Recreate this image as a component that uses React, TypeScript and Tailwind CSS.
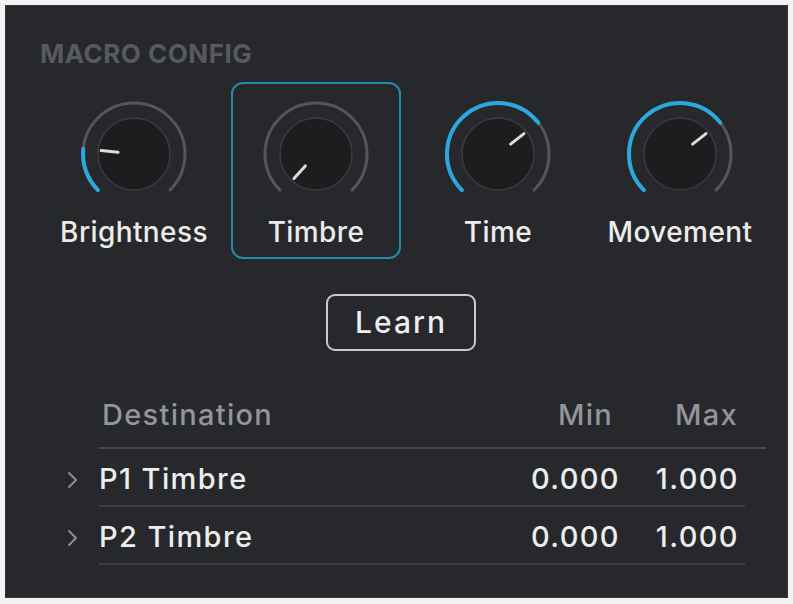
import React from 'react';

// ====================================================================
// Knob
// ====================================================================

const START = -135;
const END = 135;

function polar(cx: number, cy: number, r: number, deg: number) {
  const a = (deg * Math.PI) / 180;
  return { x: cx + r * Math.sin(a), y: cy - r * Math.cos(a) };
}

function arc(cx: number, cy: number, r: number, a0: number, a1: number) {
  const p0 = polar(cx, cy, r, a0);
  const p1 = polar(cx, cy, r, a1);
  const large = a1 - a0 > 180 ? 1 : 0;
  return `M ${p0.x} ${p0.y} A ${r} ${r} 0 ${large} 1 ${p1.x} ${p1.y}`;
}

function Knob({ angle }: { angle: number }) {
  const c = 55;
  const p0 = polar(c, c, 16, angle);
  const p1 = polar(c, c, 33, angle);
  return (
    <svg width="110" height="110" viewBox="0 0 110 110">
      <path d={arc(c, c, 51, START, END)} fill="none" stroke="#54565a" strokeWidth="3" strokeLinecap="round" />
      {angle > START + 2 && (
        <path d={arc(c, c, 51, START, angle)} fill="none" stroke="#29a9de" strokeWidth="4" strokeLinecap="round" />
      )}
      <circle cx={c} cy={c} r="36" fill="#1c1d1f" stroke="#393b3e" strokeWidth="1.5" />
      <line x1={p0.x} y1={p0.y} x2={p1.x} y2={p1.y} stroke="#dcdcdc" strokeWidth="3" strokeLinecap="round" />
    </svg>
  );
}

const macros = [
  { label: 'Brightness', angle: -84, selected: false },
  { label: 'Timbre', angle: -138, selected: true },
  { label: 'Time', angle: 52, selected: false },
  { label: 'Movement', angle: 52, selected: false },
];

const rows = [
  { name: 'P1 Timbre', min: '0.000', max: '1.000' },
  { name: 'P2 Timbre', min: '0.000', max: '1.000' },
];

// ====================================================================
// Component
// ====================================================================

export default function App() {
  return (
    <main
      className="w-[793px] h-[604px] bg-[#f3f3f3] pt-[5px] pl-[5px]"
      style={{ fontFamily: 'Inter, "Noto Sans", sans-serif' }}
    >
      <div className="w-[783px] h-[593px] bg-[#26282b] border border-[#34363a] pt-[32px]">
        {/* Title */}
        <div className="h-[30px] flex items-center pl-[34px] text-[26px] font-bold text-[#575a5e] tracking-[0.5px]">
          MACRO CONFIG
        </div>

        {/* Knobs */}
        <div className="mt-[14px] ml-[37px] grid grid-cols-[182px_182px_182px_182px]">
          {macros.map((m) => (
            <div key={m.label} className="flex justify-center">
              <div
                className={`w-[170px] h-[177px] rounded-[12px] border-2 flex flex-col items-center pt-[15px] ${
                  m.selected ? 'border-[#1f8cab]' : 'border-transparent'
                }`}
              >
                <Knob angle={m.angle} />
                <div className="mt-[7px] leading-[32px] text-[28px] font-medium tracking-[0.4px] text-[#ececec]">
                  {m.label}
                </div>
              </div>
            </div>
          ))}
        </div>

        {/* Learn */}
        <div className="mt-[35px] flex justify-center">
          <button className="ml-[9px] w-[150px] h-[57px] rounded-[9px] border-2 border-[#c9c9c9] text-[30px] font-medium tracking-[2px] text-[#eeeeee]">
            Learn
          </button>
        </div>

        {/* Table */}
        <div className="ml-[53px]">
          <div className="ml-[40px] w-[667px] h-[98px] border-b-2 border-[#47494c] flex items-end pb-[16px] pr-[28px] text-[29px] font-medium tracking-[1.3px] text-[#939598] leading-[32px]">
            <div className="flex-1 pl-[3px]">Destination</div>
            <div className="w-[100px] text-right pr-[6px]">Min</div>
            <div className="w-[119px] text-right">Max</div>
          </div>
          {rows.map((r) => (
            <div key={r.name} className="flex">
              <div className="w-[40px] h-[58px] flex items-center pt-[4px] pl-[6px]">
                <svg width="14" height="18" viewBox="0 0 14 18">
                  <path d="M4 2 L11 9 L4 16" fill="none" stroke="#8c8e91" strokeWidth="2" strokeLinecap="round" strokeLinejoin="round" />
                </svg>
              </div>
              <div className="w-[646px] h-[58px] border-b-2 border-[#3e4043] flex items-center pt-[4px] pr-[6px] text-[29px] font-medium tracking-[1.4px] text-[#ededed] leading-[32px]">
                <div className="flex-1">{r.name}</div>
                <div className="w-[100px] text-right">{r.min}</div>
                <div className="w-[119px] text-right">{r.max}</div>
              </div>
            </div>
          ))}
        </div>
      </div>
    </main>
  );
}
